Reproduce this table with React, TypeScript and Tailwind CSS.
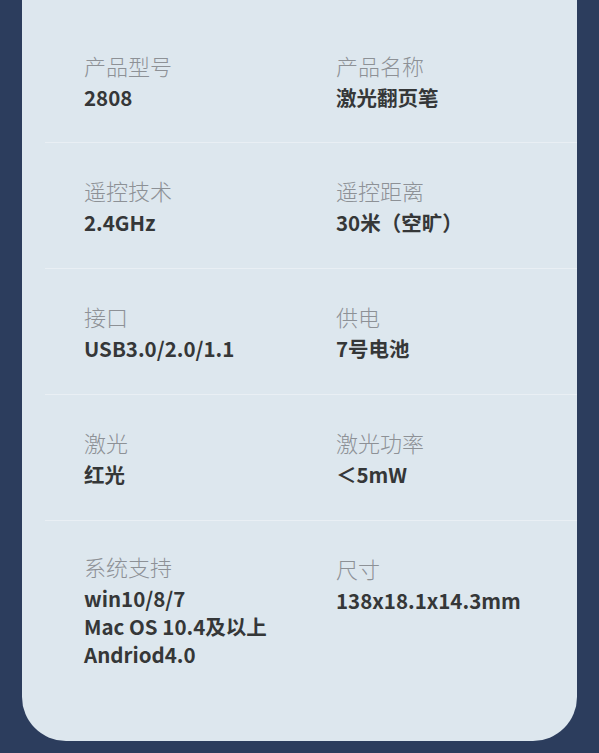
const rows = [
  { h: "h-[143px]", pt: "pt-[50px]", left: { label: "产品型号", value: ["2808"] }, right: { label: "产品名称", value: ["激光翻页笔"] } },
  { h: "h-[126px]", pt: "pt-[32px]", left: { label: "遥控技术", value: ["2.4GHz"] }, right: { label: "遥控距离", value: ["30米（空旷）"] } },
  { h: "h-[126px]", pt: "pt-[32px]", left: { label: "接口", value: ["USB3.0/2.0/1.1"] }, right: { label: "供电", value: ["7号电池"] } },
  { h: "h-[126px]", pt: "pt-[32px]", left: { label: "激光", value: ["红光"] }, right: { label: "激光功率", value: ["＜5mW"] } },
]

interface Cell {
  label: string
  value: string[]
}

function Spec({ cell, extra }: { cell: Cell; extra?: string }) {
  return (
    <div className={extra}>
      <div className="text-[22px] leading-[30px] font-light text-[#8d9196]">{cell.label}</div>
      <div className="mt-[3px] text-[20.5px] leading-[28px] font-semibold text-[#353738]">
        {cell.value.map(v => (
          <div key={v}>{v}</div>
        ))}
      </div>
    </div>
  )
}

export default function App() {
  return (
    <div
      className="w-[599px] h-[753px] bg-[#2c3d5d] px-[22px] overflow-hidden"
      style={{ fontFamily: '"Noto Sans CJK SC", "Noto Sans", sans-serif' }}
    >
      <div className="bg-[#dde7ee] h-[741px] rounded-b-[44px] flex flex-col">
        {rows.map((r, i) => (
          <div
            key={i}
            className={`${r.h} ${r.pt} ml-[23px] pl-[39px] border-b border-[#e9eff4] grid grid-cols-[252px_1fr]`}
          >
            <Spec cell={r.left} />
            <Spec cell={r.right} />
          </div>
        ))}
        <div className="pt-[30px] ml-[23px] pl-[39px] grid grid-cols-[252px_1fr]">
          <Spec cell={{ label: "系统支持", value: ["win10/8/7", "Mac OS 10.4及以上", "Andriod4.0"] }} />
          <Spec cell={{ label: "尺寸", value: ["138x18.1x14.3mm"] }} extra="pt-[2px]" />
        </div>
      </div>
    </div>
  )
}
